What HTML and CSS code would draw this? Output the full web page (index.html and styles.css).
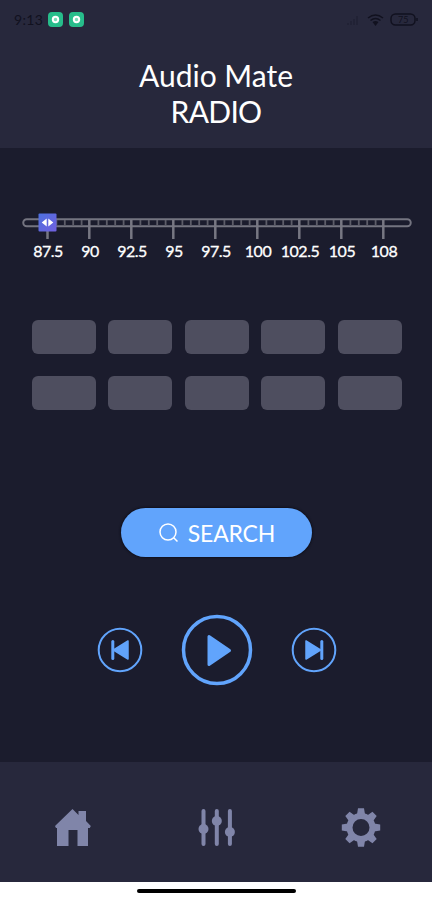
FILE: index.html
```
<!DOCTYPE html>
<html lang="en">
<head>
    <meta charset="UTF-8">
    <meta name="viewport" content="width=device-width, initial-scale=1.0">
    <title>Audio Mate Radio</title>
    <link rel="stylesheet" href="styles.css">
</head>
<body>

    <header class="header">
        <div class="status">
            <span class="time">9:13</span>
            <svg class="app-dot" width="15" height="15" viewBox="0 0 15 15">
                <rect width="15" height="15" rx="4"/>
                <circle cx="7.500" cy="7.500" r="2.700"/>
            </svg>
            <svg class="app-dot" width="15" height="15" viewBox="0 0 15 15">
                <rect width="15" height="15" rx="4"/>
                <circle cx="7.500" cy="7.500" r="2.700"/>
            </svg>
            <svg class="status-icons" width="72" height="16" viewBox="0 0 72 16">
                <path class="signal" d="M2 13v-2M5 13v-4M8 13V7M11 13V4"/>
                <path d="M22 6q7.500-6 15 0M24.500 8.500q5-4 10 0"/>
                <path class="fill" d="M26.500 10q3-2 6 0l-3 4z"/>
                <rect x="45" y="2" width="24" height="11" rx="4.500"/>
                <path d="M71 6v3"/>
                <text x="52" y="11">75</text>
            </svg>
        </div>
        <h1>Audio Mate<br><span>RADIO</span></h1>
    </header>

    <main>
        <div class="dial">
            <svg width="390" height="30" viewBox="0 0 390 30">
                <rect class="track" x="1.250" y="6.250" width="387.500" height="7" rx="3.500"/>
                <path class="minor" d="M34.400 7v6M42.800 7v6M51.200 7v6M59.600 7v6M76.400 7v6M84.800 7v6M93.200 7v6M101.600 7v6M118.400 7v6M126.800 7v6M135.200 7v6M143.600 7v6M160.400 7v6M168.800 7v6M177.200 7v6M185.600 7v6M202.400 7v6M210.800 7v6M219.200 7v6M227.600 7v6M244.400 7v6M252.800 7v6M261.200 7v6M269.600 7v6M286.400 7v6M294.800 7v6M303.200 7v6M311.600 7v6M328.400 7v6M336.800 7v6M345.200 7v6M353.600 7v6"/>
                <path class="major" d="M25.500 7v19M67.300 7v19M109.300 7v19M151.300 7v19M193.300 7v19M235.300 7v19M277.300 7v19M319.300 7v19M361.300 7v19"/>
                <defs>
                    <linearGradient id="knob" x1="0" y1="0" x2="1" y2="1">
                        <stop offset="0" stop-color="#4d70de"/>
                        <stop offset="1" stop-color="#7160df"/>
                    </linearGradient>
                </defs>
                <rect x="16.500" y="0.500" width="18" height="18" rx="1" fill="url(#knob)"/>
                <path d="M24.700 5.500v8l-5-4zM26.300 5.500v8l5-4z" fill="#fff"/>
            </svg>
            <div class="labels">
                <span>87.5</span>
                <span>90</span>
                <span>92.5</span>
                <span>95</span>
                <span>97.5</span>
                <span>100</span>
                <span>102.5</span>
                <span>105</span>
                <span>108</span>
            </div>
        </div>

        <div class="presets">
            <div class="preset"></div>
            <div class="preset"></div>
            <div class="preset"></div>
            <div class="preset"></div>
            <div class="preset"></div>
            <div class="preset"></div>
            <div class="preset"></div>
            <div class="preset"></div>
            <div class="preset"></div>
            <div class="preset"></div>
        </div>

        <button class="search">
            <svg width="20" height="20" viewBox="0 0 20 20">
                <circle cx="9" cy="9" r="8"/>
                <path d="M14.700 14.700l3.800 3.800"/>
            </svg>
            <span>SEARCH</span>
        </button>

        <div class="player">
            <button aria-label="Previous">
                <svg width="46" height="46" viewBox="0 0 46 46">
                    <circle cx="23" cy="23" r="21.300" stroke-width="2"/>
                    <path class="solid" d="M31 14v18l-14.500-9z" stroke-width="1.500"/>
                    <path d="M15.800 14.500v17" stroke-width="3"/>
                </svg>
            </button>
            <button aria-label="Play">
                <svg width="72" height="72" viewBox="0 0 72 72">
                    <circle cx="36" cy="36" r="33.500" stroke-width="3.500"/>
                    <path class="solid" d="M28 22.500v28l20.500-14z" stroke-width="3"/>
                </svg>
            </button>
            <button aria-label="Next">
                <svg width="46" height="46" viewBox="0 0 46 46">
                    <circle cx="23" cy="23" r="21.300" stroke-width="2"/>
                    <path class="solid" d="M15 14v18l14.500-9z" stroke-width="1.500"/>
                    <path d="M30.800 14.500v17" stroke-width="3"/>
                </svg>
            </button>
        </div>
    </main>

    <nav>
        <svg width="40" height="40" viewBox="0 0 40 40">
            <path d="M19.500 1l6 6V3h7.500v10l4.800 5-1 2h-1.800v18H24.500V22h-9v16H4V20H3l-1-2z"/>
        </svg>
        <svg width="40" height="40" viewBox="0 0 40 40">
            <path class="bar" d="M6.500 3v33M19.800 3v33M32.900 3v33"/>
            <circle cx="6.500" cy="21" r="5"/>
            <circle cx="19.800" cy="13" r="5"/>
            <circle cx="32.900" cy="24" r="5"/>
        </svg>
        <svg width="40" height="40" viewBox="0 0 40 40">
            <circle class="ring" cx="20" cy="19.500" r="11.500"/>
            <g id="teeth">
                <path d="M17 0.300h6l1 6h-8zM17 38.700h6l1-6h-8zM0.800 16.500v6l6 1v-8zM39.200 16.500v6l-6 1v-8z"/>
            </g>
            <use href="#teeth" transform="rotate(45 20 19.500)"/>
        </svg>
    </nav>

    <div class="home-bar"><span></span></div>

</body>
</html>
```
FILE: styles.css
```
* {
    box-sizing: border-box;
}

body {
    margin: 0;
    height: 900px;
    display: flex;
    flex-direction: column;
    background: #1b1c2d;
    color: #fff;
    font-family: Lato, "Liberation Sans", sans-serif;
    overflow: hidden;
}

.header {
    height: 148px;
    background: #27283c;
}

.status {
    display: flex;
    align-items: center;
    height: 39px;
    padding: 0 14px;
    color: #11111f;
    font-size: 14px;
}

.time {
    width: 34px;
    letter-spacing: 0.3px;
}

.app-dot {
    margin-right: 5.500px;
}

.app-dot rect {
    fill: #27bd8b;
}

.app-dot circle {
    fill: #7ddcb9;
    stroke: #fff;
    stroke-width: 2;
}

.status-icons {
    margin-left: auto;
    fill: none;
    stroke: #11111f;
    stroke-width: 1.500;
}

.status-icons .signal {
    stroke: #202033;
}

.status-icons .fill {
    fill: #11111f;
    stroke: none;
}

.status-icons text {
    fill: #11111f;
    stroke: none;
    font-size: 9px;
}

h1 {
    margin: 18px 0 0;
    font-size: 30px;
    font-weight: 400;
    line-height: 36px;
    text-align: center;
}

h1 span {
    letter-spacing: -0.700px;
}

main {
    height: 614px;
    display: flex;
    flex-direction: column;
    align-items: center;
    padding-top: 65px;
}

.dial {
    width: 390px;
    height: 50px;
    margin-left: 2px;
}

.dial svg {
    display: block;
}

.track {
    fill: none;
    stroke: #747480;
    stroke-width: 2;
}

.minor {
    stroke: #5d5d69;
    stroke-width: 1.800;
}

.major {
    stroke: #777782;
    stroke-width: 2.500;
}

.labels {
    display: grid;
    grid-template-columns: repeat(9, 42px);
    margin: -2px 0 0 5px;
    font-size: 16px;
    line-height: 20px;
    letter-spacing: -0.500px;
    white-space: nowrap;
    -webkit-text-stroke: 0.300px #fff;
}

.labels span {
    display: flex;
    justify-content: center;
}

.presets {
    display: grid;
    grid-template-columns: repeat(5, 64px);
    grid-auto-rows: 34px;
    gap: 22px 12.600px;
    margin: 57px 0 0 1.400px;
}

.preset {
    border-radius: 6px;
    background: #4e4e5f;
}

button {
    padding: 0;
    border: none;
    background: none;
    font-family: inherit;
    cursor: pointer;
}

.search {
    display: flex;
    align-items: center;
    justify-content: center;
    gap: 9px;
    width: 191px;
    height: 49px;
    margin-top: 98px;
    padding-left: 2px;
    border-radius: 25px;
    background: #61a4fc;
    color: #fff;
    font-size: 23px;
    letter-spacing: -0.200px;
    box-shadow: 0 0 2px 1px #10101c;
}

.search svg {
    fill: none;
    stroke: #fff;
    stroke-width: 1.500;
}

.player {
    display: flex;
    align-items: center;
    gap: 38px;
    margin: 57px 0 0 2px;
}

.player svg {
    display: block;
    fill: none;
    stroke: #61a4fc;
    stroke-linecap: round;
    stroke-linejoin: round;
}

.player .solid {
    fill: #61a4fc;
}

nav {
    display: flex;
    align-items: center;
    justify-content: space-between;
    height: 120px;
    padding: 11px 51px 0 53px;
    background: #27283c;
}

nav svg {
    fill: #8085a9;
}

.bar {
    stroke: #8085a9;
    stroke-width: 4;
    stroke-linecap: round;
}

.ring {
    fill: none;
    stroke: #8085a9;
    stroke-width: 6;
}

.home-bar {
    display: flex;
    justify-content: center;
    height: 18px;
    padding-top: 7px;
    background: #fff;
}

.home-bar span {
    width: 159px;
    height: 4px;
    border-radius: 2px;
    background: #000;
}
```
